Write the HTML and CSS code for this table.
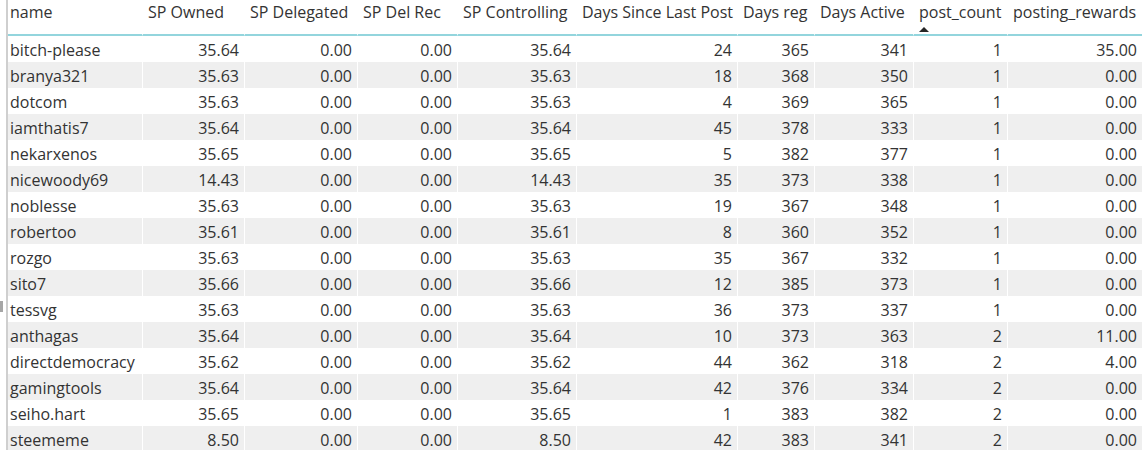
FILE: index.html
```html
<!DOCTYPE html>
<html>
<head>
<meta charset="utf-8">
<link rel="stylesheet" href="styles.css">
</head>
<body>
<span class="handle"></span>
<div class="frame">
  <table class="grid">
    <colgroup>
      <col class="c-name"><col class="c-own"><col class="c-del"><col class="c-rec"><col class="c-ctl"><col class="c-since"><col class="c-reg"><col class="c-act"><col class="c-cnt"><col class="c-rew">
    </colgroup>
    <thead>
      <tr>
        <th>name</th><th>SP Owned</th><th>SP Delegated</th><th>SP Del Rec</th><th>SP Controlling</th><th>Days Since Last Post</th><th>Days reg</th><th>Days Active</th><th class="sorted">post_count<span class="arrow"></span></th><th>posting_rewards</th>
      </tr>
    </thead>
    <tbody>
      <tr><td>bitch-please</td><td>35.64</td><td>0.00</td><td>0.00</td><td>35.64</td><td>24</td><td>365</td><td>341</td><td>1</td><td>35.00</td></tr>
      <tr><td>branya321</td><td>35.63</td><td>0.00</td><td>0.00</td><td>35.63</td><td>18</td><td>368</td><td>350</td><td>1</td><td>0.00</td></tr>
      <tr><td>dotcom</td><td>35.63</td><td>0.00</td><td>0.00</td><td>35.63</td><td>4</td><td>369</td><td>365</td><td>1</td><td>0.00</td></tr>
      <tr><td>iamthatis7</td><td>35.64</td><td>0.00</td><td>0.00</td><td>35.64</td><td>45</td><td>378</td><td>333</td><td>1</td><td>0.00</td></tr>
      <tr><td>nekarxenos</td><td>35.65</td><td>0.00</td><td>0.00</td><td>35.65</td><td>5</td><td>382</td><td>377</td><td>1</td><td>0.00</td></tr>
      <tr><td>nicewoody69</td><td>14.43</td><td>0.00</td><td>0.00</td><td>14.43</td><td>35</td><td>373</td><td>338</td><td>1</td><td>0.00</td></tr>
      <tr><td>noblesse</td><td>35.63</td><td>0.00</td><td>0.00</td><td>35.63</td><td>19</td><td>367</td><td>348</td><td>1</td><td>0.00</td></tr>
      <tr><td>robertoo</td><td>35.61</td><td>0.00</td><td>0.00</td><td>35.61</td><td>8</td><td>360</td><td>352</td><td>1</td><td>0.00</td></tr>
      <tr><td>rozgo</td><td>35.63</td><td>0.00</td><td>0.00</td><td>35.63</td><td>35</td><td>367</td><td>332</td><td>1</td><td>0.00</td></tr>
      <tr><td>sito7</td><td>35.66</td><td>0.00</td><td>0.00</td><td>35.66</td><td>12</td><td>385</td><td>373</td><td>1</td><td>0.00</td></tr>
      <tr><td>tessvg</td><td>35.63</td><td>0.00</td><td>0.00</td><td>35.63</td><td>36</td><td>373</td><td>337</td><td>1</td><td>0.00</td></tr>
      <tr><td>anthagas</td><td>35.64</td><td>0.00</td><td>0.00</td><td>35.64</td><td>10</td><td>373</td><td>363</td><td>2</td><td>11.00</td></tr>
      <tr><td>directdemocracy</td><td>35.62</td><td>0.00</td><td>0.00</td><td>35.62</td><td>44</td><td>362</td><td>318</td><td>2</td><td>4.00</td></tr>
      <tr><td>gamingtools</td><td>35.64</td><td>0.00</td><td>0.00</td><td>35.64</td><td>42</td><td>376</td><td>334</td><td>2</td><td>0.00</td></tr>
      <tr><td>seiho.hart</td><td>35.65</td><td>0.00</td><td>0.00</td><td>35.65</td><td>1</td><td>383</td><td>382</td><td>2</td><td>0.00</td></tr>
      <tr><td>steememe</td><td>8.50</td><td>0.00</td><td>0.00</td><td>8.50</td><td>42</td><td>383</td><td>341</td><td>2</td><td>0.00</td></tr>
    </tbody>
  </table>
</div>
</body>
</html>
```

FILE: styles.css
```css
html, body {
  margin: 0;
  padding: 0;
  background: #fff;
  overflow: hidden;
}
body {
  position: relative;
  font-family: "Segoe UI", "Open Sans", "Noto Sans", sans-serif;
  font-size: 16px;
  color: #333;
}
.frame {
  height: 450px;
  margin-left: 6px;
  border-left: 2px solid #cfcfcf;
  overflow: hidden;
}
.handle {
  position: absolute;
  left: 0;
  top: 301px;
  width: 3px;
  height: 11px;
  background: #a6a6a6;
}
.grid {
  table-layout: fixed;
  width: 1134px;
  border-collapse: separate;
  border-spacing: 0;
}
.c-name { width: 135px; }
.c-own { width: 102px; }
.c-del { width: 113px; }
.c-rec { width: 100px; }
.c-ctl { width: 119px; }
.c-since { width: 161px; }
.c-reg { width: 77px; }
.c-act { width: 99px; }
.c-cnt { width: 94px; }
.c-rew { width: 134px; }

.grid th {
  position: relative;
  height: 36px;
  padding: 0 0 0 5px;
  box-sizing: border-box;
  text-align: left;
  vertical-align: top;
  font-weight: normal;
  line-height: 24px;
  white-space: nowrap;
  border-bottom: 2px solid #93d5dd;
  border-right: 1px solid #fff;
}
.grid th:first-child { padding-left: 2px; }
.grid th:last-child { border-right: 0; }
.arrow {
  position: absolute;
  left: 5px;
  top: 27px;
  width: 0;
  height: 0;
  border-left: 5px solid transparent;
  border-right: 5px solid transparent;
  border-bottom: 5px solid #252525;
}
.grid td {
  height: 26px;
  padding: 1px 5px 0 0;
  box-sizing: border-box;
  text-align: right;
  line-height: 24px;
  white-space: nowrap;
  border-right: 1px solid #fff;
}
.grid td:first-child {
  text-align: left;
  padding: 1px 0 0 2px;
}
.grid td:last-child { border-right: 0; }
.grid tbody tr:nth-child(even) td { background: #efefef; }
```
